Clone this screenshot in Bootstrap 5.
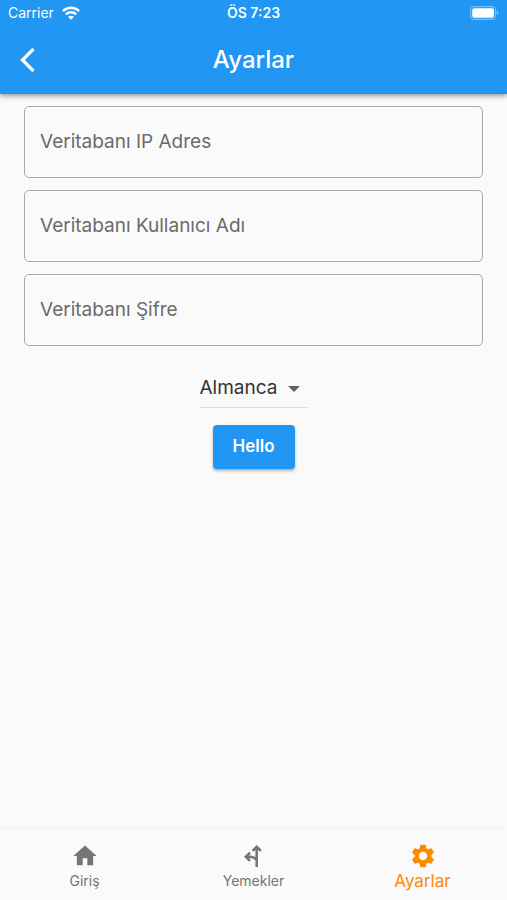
<!DOCTYPE html>
<html lang="tr">
<head>
<meta charset="utf-8">
<meta name="viewport" content="width=device-width, initial-scale=1">
<title>Ayarlar</title>
<link href="https://cdn.jsdelivr.net/npm/bootstrap@5.3.0/dist/css/bootstrap.min.css" rel="stylesheet">
<style>
  body { font-family: Inter, "Liberation Sans", sans-serif; background: #fafafa; }
  .app-header { background: #2196f3; color: #fff; box-shadow: 0 2px 5px rgba(0,0,0,.4); }
  .status-bar { height: 26px; font-size: 14px; line-height: 26px; padding: 0 8px; }
  .title-bar { height: 68px; padding: 0 12px; }
  .side { flex: 1 1 0; }
  .title-bar h1 { font-size: 24px; line-height: 28px; font-weight: 500; }
  .settings-form { padding: 12px 24px 0; }
  .field-list { gap: 12px; }
  .field { height: 72px; padding: 0 15px; font-size: 19px; color: #212121; background: transparent; border: 1px solid #a8a8a8; border-radius: 5px; }
  .field-label { left: 16px; top: 0; line-height: 72px; font-size: 19px; color: #6b6b6b; pointer-events: none; }
  .field:focus + .field-label, .field:not(:placeholder-shown) + .field-label { line-height: 24px; font-size: 14px; }
  .language { margin-top: 24px; width: 108px; border-bottom: 1px solid #dfdfdf; }
  .language select { appearance: none; border: 0; background: transparent; height: 37px; padding: 0; font-size: 19px; color: #333; }
  .language svg { right: 8px; pointer-events: none; }
  .hello { margin-top: 17px; width: 82px; height: 44px; padding: 0; font-size: 17px; font-weight: 600; border: 0; border-radius: 4px; background: #2196f3; color: #fff; box-shadow: 0 2px 3px rgba(0,0,0,.3); }
  .bottom-bar { height: 71px; padding-top: 13px; box-shadow: 0 -1px 2px rgba(0,0,0,.04); }
  .tab-link { color: #757575; font-size: 14px; line-height: 22px; }
  .tab-link.current { color: #fb8c00; font-size: 17px; }
</style>
<script src="https://cdn.jsdelivr.net/npm/bootstrap@5.3.0/dist/js/bootstrap.bundle.min.js"></script>
</head>
<body class="d-flex flex-column min-vh-100">
<header class="app-header">
  <div class="status-bar d-flex align-items-center">
    <div class="side d-flex align-items-center gap-2">
      <span>Carrier</span>
      <svg width="18" height="14" viewBox="0 0 18 14" fill="none" stroke="#fff" stroke-width="2.4" aria-hidden="true"><path d="M.9 5.1C5.5.7 12.5.7 17.1 5.1M3.8 8.3c3-2.8 7.4-2.8 10.4 0"/><path d="M9 13.8l-3-3c1.7-1.5 4.3-1.5 6 0z" fill="#fff" stroke="none"/></svg>
    </div>
    <span class="fw-semibold">ÖS 7:23</span>
    <div class="side d-flex justify-content-end">
      <svg width="29" height="14" viewBox="0 0 29 14" aria-hidden="true"><rect x=".6" y=".6" width="25" height="12.8" rx="3.6" fill="none" stroke="#fff" stroke-opacity=".4" stroke-width="1.2"/><rect x="2.2" y="2.2" width="21.8" height="9.6" rx="2" fill="#fff"/><path d="M27 4.8c2 .7 2 3.7 0 4.4z" fill="#fff" fill-opacity=".45"/></svg>
    </div>
  </div>
  <div class="title-bar d-flex align-items-center">
    <div class="side"><button type="button" class="btn p-0 border-0 d-flex" aria-label="Geri">
      <svg width="32" height="32" viewBox="0 0 32 32" fill="none" stroke="#fff" stroke-width="3.2" aria-hidden="true"><path d="M21.500 5L10.500 16l11 11"/></svg>
    </button></div>
    <h1 class="m-0">Ayarlar</h1>
    <div class="side"></div>
  </div>
</header>
<main class="flex-grow-1">
  <form class="settings-form d-flex flex-column align-items-center">
    <div class="field-list w-100 d-grid">
      <div class="position-relative"><input id="ip" type="text" class="field w-100 d-block" placeholder=" "><label for="ip" class="field-label position-absolute">Veritabanı IP Adres</label></div>
      <div class="position-relative"><input id="user" type="text" class="field w-100 d-block" placeholder=" "><label for="user" class="field-label position-absolute">Veritabanı Kullanıcı Adı</label></div>
      <div class="position-relative"><input id="pass" type="password" class="field w-100 d-block" placeholder=" "><label for="pass" class="field-label position-absolute">Veritabanı Şifre</label></div>
    </div>
    <div class="language position-relative d-flex align-items-center">
      <select id="lang" class="w-100" aria-label="Dil"><option>Almanca</option></select>
      <svg class="position-absolute" width="12" height="6" viewBox="0 0 12 6" fill="#616161" aria-hidden="true"><path d="M0 0h12L6 6z"/></svg>
    </div>
    <button type="button" class="btn hello">Hello</button>
  </form>
</main>
<nav class="bottom-bar d-flex text-center">
  <a href="#" class="tab-link side text-decoration-none d-flex flex-column align-items-center">
    <svg width="28" height="28" viewBox="0 0 24 24" fill="currentColor" aria-hidden="true"><path d="M10 20v-6h4v6h5v-8h3L12 3 2 12h3v8z"/></svg>
    <span>Giriş</span>
  </a>
  <a href="#" class="tab-link side text-decoration-none d-flex flex-column align-items-center">
    <svg width="28" height="28" viewBox="0 0 28 28" fill="none" stroke="currentColor" stroke-width="2.6" aria-hidden="true"><path d="M16.700 25V5M12.600 8.900l4.100-4.100 4.100 4.100M10 10.700L5.900 14.800l4.100 4.100M6.500 14.800h3.500c3.300 0 5 1.200 6.700 3"/></svg>
    <span>Yemekler</span>
  </a>
  <a href="#" class="tab-link current side text-decoration-none d-flex flex-column align-items-center" aria-current="page">
    <svg width="28" height="28" viewBox="0 0 24 24" fill="currentColor" aria-hidden="true"><path d="M19.140 12.940c.04-.3.060-.61.060-.94 0-.32-.02-.64-.07-.94l2.030-1.580c.18-.14.230-.41.120-.61l-1.920-3.320c-.12-.22-.37-.29-.59-.22l-2.390.96c-.5-.38-1.030-.7-1.620-.94l-.36-2.540c-.04-.24-.24-.41-.48-.41h-3.840c-.24 0-.43.170-.47.410l-.36 2.540c-.59.240-1.130.570-1.620.940l-2.390-.96c-.22-.08-.47 0-.59.220L2.740 8.870c-.12.210-.08.470.120.610l2.030 1.580c-.05.300-.09.630-.09.940s.02.640.070.940l-2.030 1.580c-.18.140-.23.410-.12.610l1.920 3.320c.12.220.37.290.59.220l2.390-.96c.5.380 1.030.700 1.620.940l.36 2.540c.05.240.240.410.480.410h3.840c.24 0 .44-.17.470-.41l.36-2.540c.59-.24 1.130-.56 1.620-.94l2.390.96c.22.080.470 0 .590-.22l1.920-3.320c.12-.22.070-.47-.12-.61l-2.010-1.580zM12 15.600c-1.980 0-3.600-1.620-3.600-3.600s1.620-3.600 3.600-3.600 3.600 1.620 3.600 3.600-1.620 3.600-3.600 3.600z"/></svg>
    <span>Ayarlar</span>
  </a>
</nav>
</body>
</html>
